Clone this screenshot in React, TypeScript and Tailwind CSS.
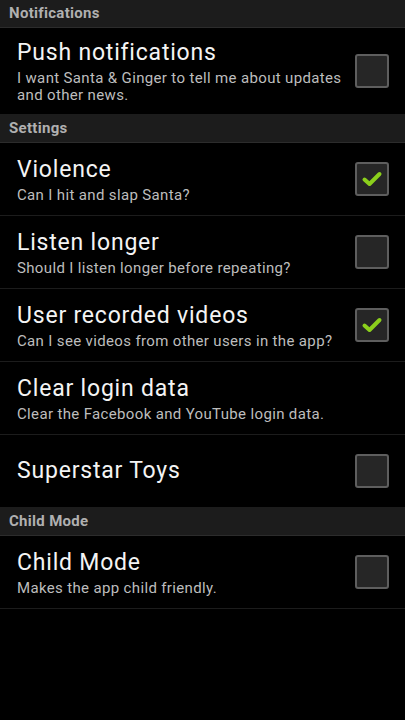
import React from "react";

function Check({ checked }: { checked: boolean }) {
  return (
    <div className="w-[34px] h-[34px] shrink-0 rounded-[3px] border-2 border-[#5e5e5e] bg-[#262626] flex items-center justify-center">
      {checked && (
        <svg width="22" height="18" viewBox="0 0 22 18">
          <path d="M3.5 9.5 L8.5 14 L18.5 4" fill="none" stroke="#8bcf1c" strokeWidth="4" strokeLinecap="round" strokeLinejoin="round" />
        </svg>
      )}
    </div>
  );
}

function Header({ label }: { label: string }) {
  return (
    <div className="h-[28px] bg-[#1c1c1c] border-b border-[#2c2c2c] flex items-center pl-[9px] text-[15px] tracking-[0.3px] font-bold text-[#b0b0b0]">
      {label}
    </div>
  );
}

function Row({ title, sub, checkbox, checked = false, tall = false }: { title: string; sub?: string; checkbox?: boolean; checked?: boolean; tall?: boolean }) {
  return (
    <div className={`${tall ? "h-[87px]" : "h-[73px]"} border-b border-[#1c1c1c] flex items-center pl-[17px] pr-[16px]`}>
      <div className="flex-1 min-w-0">
        <div className="text-[23px] leading-[30px] tracking-[0.8px] text-[#f4f4f4]">{title}</div>
        {sub && <div className="mt-[2px] text-[15px] leading-[17px] tracking-[0.35px] text-[#bdbdbd] pr-2">{sub}</div>}
      </div>
      {checkbox && <Check checked={checked} />}
    </div>
  );
}

export default function App() {
  return (
    <div className="w-[405px] h-[720px] bg-black overflow-hidden" style={{ fontFamily: "Roboto, 'Noto Sans', sans-serif" }}>
      <Header label="Notifications" />
      <Row title="Push notifications" sub="I want Santa & Ginger to tell me about updates and other news." checkbox tall />
      <Header label="Settings" />
      <Row title="Violence" sub="Can I hit and slap Santa?" checkbox checked />
      <Row title="Listen longer" sub="Should I listen longer before repeating?" checkbox />
      <Row title="User recorded videos" sub="Can I see videos from other users in the app?" checkbox checked />
      <Row title="Clear login data" sub="Clear the Facebook and YouTube login data." />
      <Row title="Superstar Toys" checkbox />
      <Header label="Child Mode" />
      <Row title="Child Mode" sub="Makes the app child friendly." checkbox />
    </div>
  );
}
